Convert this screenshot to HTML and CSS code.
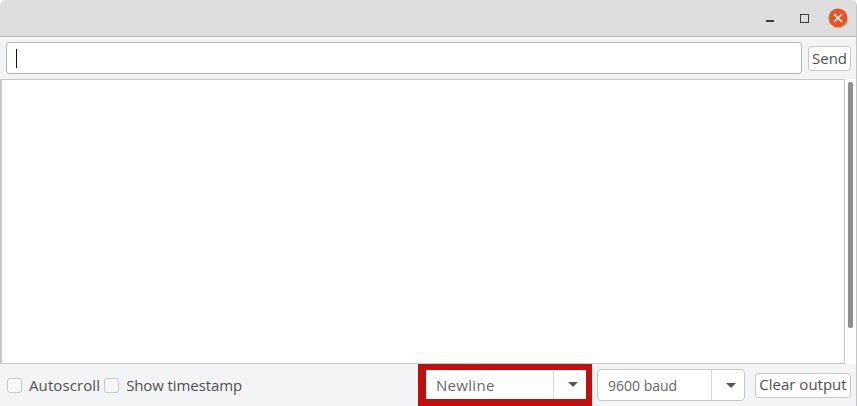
FILE: index.html
```html
<!DOCTYPE html>
<html lang="en">
<head>
<meta charset="utf-8">
<title>Serial Monitor</title>
<link rel="stylesheet" href="styles.css">
</head>
<body>
<div class="window">
  <header class="titlebar">
    <span class="wm wm-min"></span>
    <span class="wm wm-max"></span>
    <span class="wm-close">
      <svg width="24" height="24" viewBox="0 0 24 24"><circle cx="12" cy="12" r="9.5" fill="#e95420"/><path d="M8 8l8 8M16 8l-8 8" stroke="#fff" stroke-width="1.6" fill="none"/></svg>
    </span>
  </header>
  <div class="toolbar">
    <div class="input"><span class="caret"></span></div>
    <button class="btn btn-send">Send</button>
  </div>
  <div class="monitor">
    <div class="output"></div>
    <div class="scrollbar"><div class="thumb"></div></div>
  </div>
  <footer class="statusbar">
    <label class="check check-first"><span class="box"></span>Autoscroll</label>
    <label class="check check-second"><span class="box"></span>Show timestamp</label>
    <div class="highlight">
      <div class="select select-newline">
        <span class="select-label">Newline</span>
        <span class="select-arrow"><i class="tri"></i></span>
      </div>
    </div>
    <div class="select select-baud">
      <span class="select-label">9600 baud</span>
      <span class="select-arrow"><i class="tri"></i></span>
    </div>
    <button class="btn btn-clear">Clear output</button>
  </footer>
</div>
</body>
</html>
```
FILE: styles.css
```css
* { box-sizing: border-box; }
html, body { margin: 0; padding: 0; }
body { background: #fff; font-family: "Open Sans", "Noto Sans", sans-serif; color: #4a4a4a; }
.window { width: 857px; height: 406px; display: flex; flex-direction: column; background: #f3f4f6; overflow: hidden; border-radius: 6px 6px 0 0; border-right: 1px solid #c4c4c4; }
.titlebar { height: 37px; flex: none; background: #dedede; border-bottom: 1px solid #b9b9b9; display: flex; align-items: center; justify-content: flex-end; padding-right: 6px; }
.wm { display: block; flex: none; }
.wm-min { width: 8px; height: 2px; background: #3d3d3d; margin-top: 5px; margin-right: 26px; }
.wm-max { width: 9px; height: 9px; border: 1px solid #3d3d3d; margin-right: 17px; }
.wm-close { display: flex; width: 24px; height: 24px; margin-top: -1px; }
.toolbar { height: 42px; flex: none; display: flex; align-items: flex-start; padding: 5px 5px 0 6px; gap: 6px; }
.input { flex: none; width: 796px; height: 32px; background: #fff; border: 1px solid #b5b5b5; border-radius: 3px; display: flex; align-items: center; padding-left: 9px; }
.caret { width: 1px; height: 19px; background: #111; }
.btn { flex: none; font-family: inherit; font-size: 15px; color: #505050; background: #fff; border: 1px solid #c8c8c8; border-radius: 3px; padding: 0 0 2px; height: 25px; white-space: nowrap; }
.btn-send { width: 43px; margin-top: 4px; }
.monitor { height: 285px; flex: none; display: flex; }
.output { width: 846px; background: #fff; border: 1px solid #c8c8c8; border-left-width: 2px; }
.scrollbar { flex: 1; padding: 3px 3px 0 3px; background: #fdfdfd; }
.thumb { width: 5px; height: 246px; background: #8f8f8f; border-radius: 2px; }
.statusbar { flex: 1; display: flex; align-items: center; padding: 0 5px 0 7px; font-size: 15px; color: #505050; }
.check { display: flex; align-items: center; white-space: nowrap; }
.check-first { letter-spacing: 0.1px; }
.check-second { letter-spacing: -0.1px; margin-left: 4px; }
.box { width: 15px; height: 15px; background: #f7f7f7; border: 1px solid #c8c8c8; border-radius: 3px; margin-right: 7px; }
.highlight { margin-left: auto; width: 174px; height: 42px; border: 8px solid #c70c0c; border-width: 6px 6px 7px 8px; flex: none; }
.select { display: flex; background: #fff; font-size: 15px; color: #666; align-items: center; }
.select-label { flex: 1; padding-left: 10px; }
.select-arrow { width: 33px; height: 100%; display: flex; align-items: center; justify-content: center; padding-left: 5px; border-left: 1px solid #d8d8d8; }
.tri { width: 0; height: 0; border-left: 5.5px solid transparent; border-right: 5.5px solid transparent; border-top: 5px solid #555; }
.select-newline { height: 100%; border-radius: 3px; letter-spacing: 0.3px; }
.select-baud { width: 148px; height: 32px; margin-left: 5px; border: 1px solid #c8c8c8; border-radius: 4px; font-size: 14px; }
.btn-clear { width: 96px; margin-left: 10px; height: 25px; }
```
